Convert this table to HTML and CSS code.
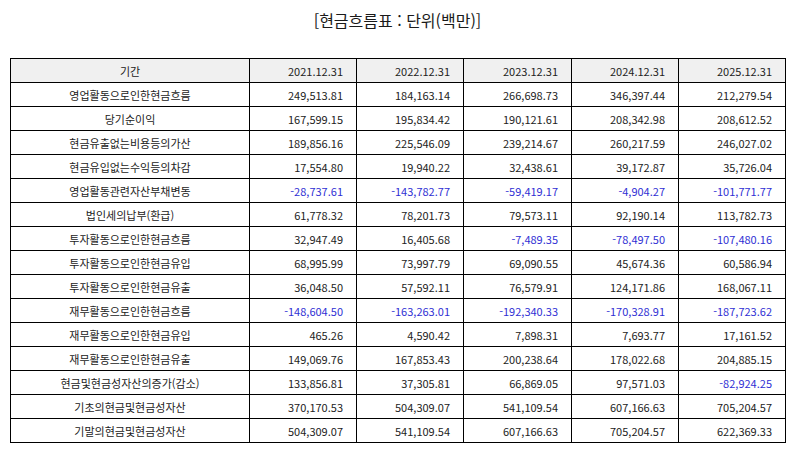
FILE: index.html
```html
<!DOCTYPE html>
<html lang="ko">
<head>
<meta charset="utf-8">
<title>현금흐름표</title>
<link rel="stylesheet" href="styles.css">
</head>
<body>
<div class="page">
  <h1 class="title">[현금흐름표 : 단위(백만)]</h1>
  <table class="cf">
    <colgroup>
      <col class="c-label"><col class="c-num"><col class="c-num"><col class="c-num3"><col class="c-num"><col class="c-num">
    </colgroup>
    <thead>
      <tr><th class="lbl">기간</th><th>2021.12.31</th><th>2022.12.31</th><th>2023.12.31</th><th>2024.12.31</th><th>2025.12.31</th></tr>
    </thead>
    <tbody>
      <tr><td class="lbl">영업활동으로인한현금흐름</td><td>249,513.81</td><td>184,163.14</td><td>266,698.73</td><td>346,397.44</td><td>212,279.54</td></tr>
      <tr><td class="lbl">당기순이익</td><td>167,599.15</td><td>195,834.42</td><td>190,121.61</td><td>208,342.98</td><td>208,612.52</td></tr>
      <tr><td class="lbl">현금유출없는비용등의가산</td><td>189,856.16</td><td>225,546.09</td><td>239,214.67</td><td>260,217.59</td><td>246,027.02</td></tr>
      <tr><td class="lbl">현금유입없는수익등의차감</td><td>17,554.80</td><td>19,940.22</td><td>32,438.61</td><td>39,172.87</td><td>35,726.04</td></tr>
      <tr><td class="lbl">영업활동관련자산부채변동</td><td class="neg">-28,737.61</td><td class="neg">-143,782.77</td><td class="neg">-59,419.17</td><td class="neg">-4,904.27</td><td class="neg">-101,771.77</td></tr>
      <tr><td class="lbl">법인세의납부(환급)</td><td>61,778.32</td><td>78,201.73</td><td>79,573.11</td><td>92,190.14</td><td>113,782.73</td></tr>
      <tr><td class="lbl">투자활동으로인한현금흐름</td><td>32,947.49</td><td>16,405.68</td><td class="neg">-7,489.35</td><td class="neg">-78,497.50</td><td class="neg">-107,480.16</td></tr>
      <tr><td class="lbl">투자활동으로인한현금유입</td><td>68,995.99</td><td>73,997.79</td><td>69,090.55</td><td>45,674.36</td><td>60,586.94</td></tr>
      <tr><td class="lbl">투자활동으로인한현금유출</td><td>36,048.50</td><td>57,592.11</td><td>76,579.91</td><td>124,171.86</td><td>168,067.11</td></tr>
      <tr><td class="lbl">재무활동으로인한현금흐름</td><td class="neg">-148,604.50</td><td class="neg">-163,263.01</td><td class="neg">-192,340.33</td><td class="neg">-170,328.91</td><td class="neg">-187,723.62</td></tr>
      <tr><td class="lbl">재무활동으로인한현금유입</td><td>465.26</td><td>4,590.42</td><td>7,898.31</td><td>7,693.77</td><td>17,161.52</td></tr>
      <tr><td class="lbl">재무활동으로인한현금유출</td><td>149,069.76</td><td>167,853.43</td><td>200,238.64</td><td>178,022.68</td><td>204,885.15</td></tr>
      <tr><td class="lbl">현금및현금성자산의증가(감소)</td><td>133,856.81</td><td>37,305.81</td><td>66,869.05</td><td>97,571.03</td><td class="neg">-82,924.25</td></tr>
      <tr><td class="lbl">기초의현금및현금성자산</td><td>370,170.53</td><td>504,309.07</td><td>541,109.54</td><td>607,166.63</td><td>705,204.57</td></tr>
      <tr><td class="lbl">기말의현금및현금성자산</td><td>504,309.07</td><td>541,109.54</td><td>607,166.63</td><td>705,204.57</td><td>622,369.33</td></tr>
    </tbody>
  </table>
</div>
</body>
</html>
```

FILE: styles.css
```css
html, body {
  margin: 0;
  padding: 0;
  background: #ffffff;
}

body {
  font-family: "Noto Sans CJK KR", "Noto Sans", sans-serif;
  color: #222222;
}

.page {
  width: 794px;
  padding: 0 0 0 10px;
  box-sizing: border-box;
}

.title {
  margin: 0 0 16px 0;
  width: 775px;
  height: 42px;
  line-height: 40px;
  font-size: 16px;
  font-weight: 400;
  text-align: center;
  color: #1a1a1a;
}

.cf {
  border-collapse: collapse;
  table-layout: fixed;
  width: 776px;
  font-size: 11px;
}

.c-label { width: 239px; }
.c-num { width: 107px; }
.c-num3 { width: 108px; }

.cf th,
.cf td {
  border: 1px solid #000000;
  height: 24px;
  padding: 0 13px 0 4px;
  box-sizing: border-box;
  text-align: right;
  font-weight: 400;
  white-space: nowrap;
  line-height: 14px;
}

.cf th {
  background: #f0f0f0;
}

.cf .lbl {
  text-align: center;
  padding: 0 4px;
}

.cf .neg {
  color: #2f2fd4;
}
```
